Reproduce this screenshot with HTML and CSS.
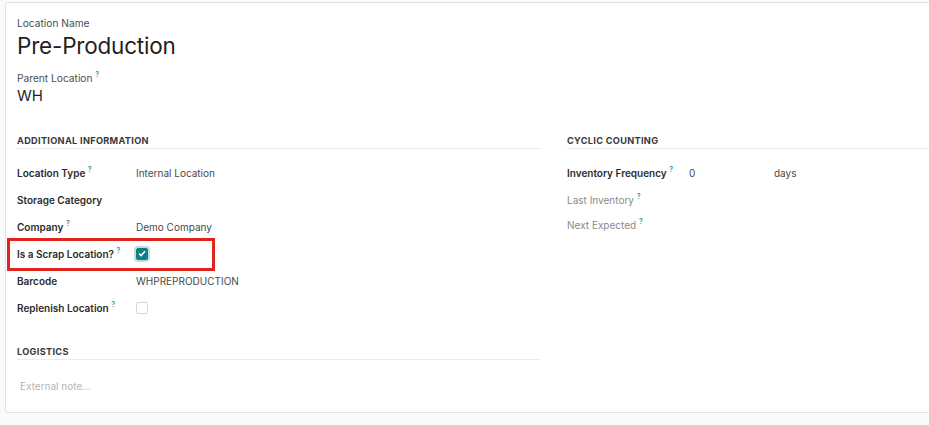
FILE: index.html
```html
<!DOCTYPE html>
<html lang="en">
<head>
    <meta charset="UTF-8">
    <meta name="viewport" content="width=device-width, initial-scale=1.0">
    <title>Pre-Production</title>
    <link rel="stylesheet" href="styles.css">
</head>
<body>
    <div class="sheet">
        <div class="title-block">
            <div class="small-label">Location Name</div>
            <div class="record-name">Pre-Production</div>
            <div class="small-label parent">Parent Location <sup class="tip">?</sup></div>
            <div class="parent-value">WH</div>
        </div>

        <div class="columns">
            <div class="group">
                <div class="separator">Additional Information</div>
                <div class="field-row">
                    <span class="field-label">Location Type <sup class="tip">?</sup></span>
                    <span class="field-value">Internal Location</span>
                </div>
                <div class="field-row">
                    <span class="field-label">Storage Category</span>
                    <span class="field-value"></span>
                </div>
                <div class="field-row">
                    <span class="field-label">Company <sup class="tip">?</sup></span>
                    <span class="field-value">Demo Company</span>
                </div>
                <div class="field-row highlight">
                    <span class="field-label">Is a Scrap Location? <sup class="tip">?</sup></span>
                    <span class="field-value">
                        <span class="checkbox checked">
                            <svg width="8" height="7" viewBox="0 0 8 7"><path d="M1 3.6 L3.1 5.5 L7 1.2" fill="none" stroke="#fff" stroke-width="1.6"/></svg>
                        </span>
                    </span>
                </div>
                <div class="field-row">
                    <span class="field-label">Barcode</span>
                    <span class="field-value">WHPREPRODUCTION</span>
                </div>
                <div class="field-row">
                    <span class="field-label">Replenish Location <sup class="tip">?</sup></span>
                    <span class="field-value"><span class="checkbox"></span></span>
                </div>
            </div>

            <div class="group">
                <div class="separator">Cyclic Counting</div>
                <div class="field-row wide">
                    <span class="field-label">Inventory Frequency <sup class="tip">?</sup></span>
                    <span class="field-value freq"><span class="freq-num">0</span><span>days</span></span>
                </div>
                <div class="field-row wide muted">
                    <span class="field-label">Last Inventory <sup class="tip">?</sup></span>
                    <span class="field-value"></span>
                </div>
                <div class="field-row wide muted short">
                    <span class="field-label">Next Expected <sup class="tip">?</sup></span>
                    <span class="field-value"></span>
                </div>
            </div>
        </div>

        <div class="group logistics">
            <div class="separator">Logistics</div>
            <div class="note">External note...</div>
        </div>
    </div>
</body>
</html>
```

FILE: styles.css
```css
body {
    margin: 0;
    padding: 2px 0 0 5px;
    background-color: #f9fafb;
    font-family: Inter, "Noto Sans", sans-serif;
    color: #212529;
    overflow: hidden;
    height: 425px;
    box-sizing: border-box;
}
.sheet {
    width: 1100px;
    height: 411px;
    box-sizing: border-box;
    background-color: #fff;
    border: 1px solid #dee2e6;
    border-radius: 3px;
    padding: 13px 0 0 11px;
}
.small-label {
    font-size: 10.2px;
    color: #4c4c4c;
    line-height: 14px;
}
.record-name {
    font-size: 22.5px;
    line-height: 32px;
    color: #1f1f1f;
    letter-spacing: -0.2px;
}
.parent {
    margin-top: 9px;
}
.parent-value {
    font-size: 15px;
    line-height: 20px;
    color: #1f1f1f;
    margin-top: 1px;
}
.tip {
    color: #3d8f94;
    font-size: 7px;
    font-weight: 600;
    vertical-align: 5px;
    line-height: 0;
}
.columns {
    display: flex;
    gap: 26px;
    margin-top: 29px;
}
.group {
    width: 524px;
}
.separator {
    font-size: 9.2px;
    font-weight: 700;
    text-transform: uppercase;
    letter-spacing: 0.3px;
    color: #3a3a3a;
    padding-bottom: 2px;
    border-bottom: 1px solid #e9ecef;
    line-height: 11px;
    margin-bottom: 10px;
}
.field-row {
    display: flex;
    align-items: center;
    height: 27px;
    font-size: 10px;
}
.field-label {
    width: 119px;
    font-weight: 600;
    color: #2b2b2b;
}
.wide .field-label {
    width: 122px;
}
.field-value {
    color: #494949;
}
.muted .field-label {
    font-weight: 400;
    color: #8a8a8a;
}
.short {
    height: 23px;
}
.freq {
    display: flex;
}
.freq-num {
    width: 85px;
}
.highlight {
    position: relative;
}
.highlight::before {
    content: "";
    position: absolute;
    left: -10px;
    top: -2px;
    width: 208px;
    height: 33px;
    border: 3px solid #e0231c;
    box-sizing: border-box;
}
.checkbox {
    display: flex;
    align-items: center;
    justify-content: center;
    width: 10px;
    height: 10px;
    border: 1px solid #d5d8dc;
    border-radius: 2px;
    background-color: #fff;
}
.checkbox.checked {
    background-color: #0e7f84;
    border-color: #0e7f84;
    box-shadow: 0 0 0 2px #c9dcdd;
}
.logistics {
    margin-top: 25px;
}
.logistics .separator {
    margin-bottom: 0;
}
.note {
    font-size: 10px;
    color: #b5b5b5;
    padding: 20px 0 0 3px;
}
```
